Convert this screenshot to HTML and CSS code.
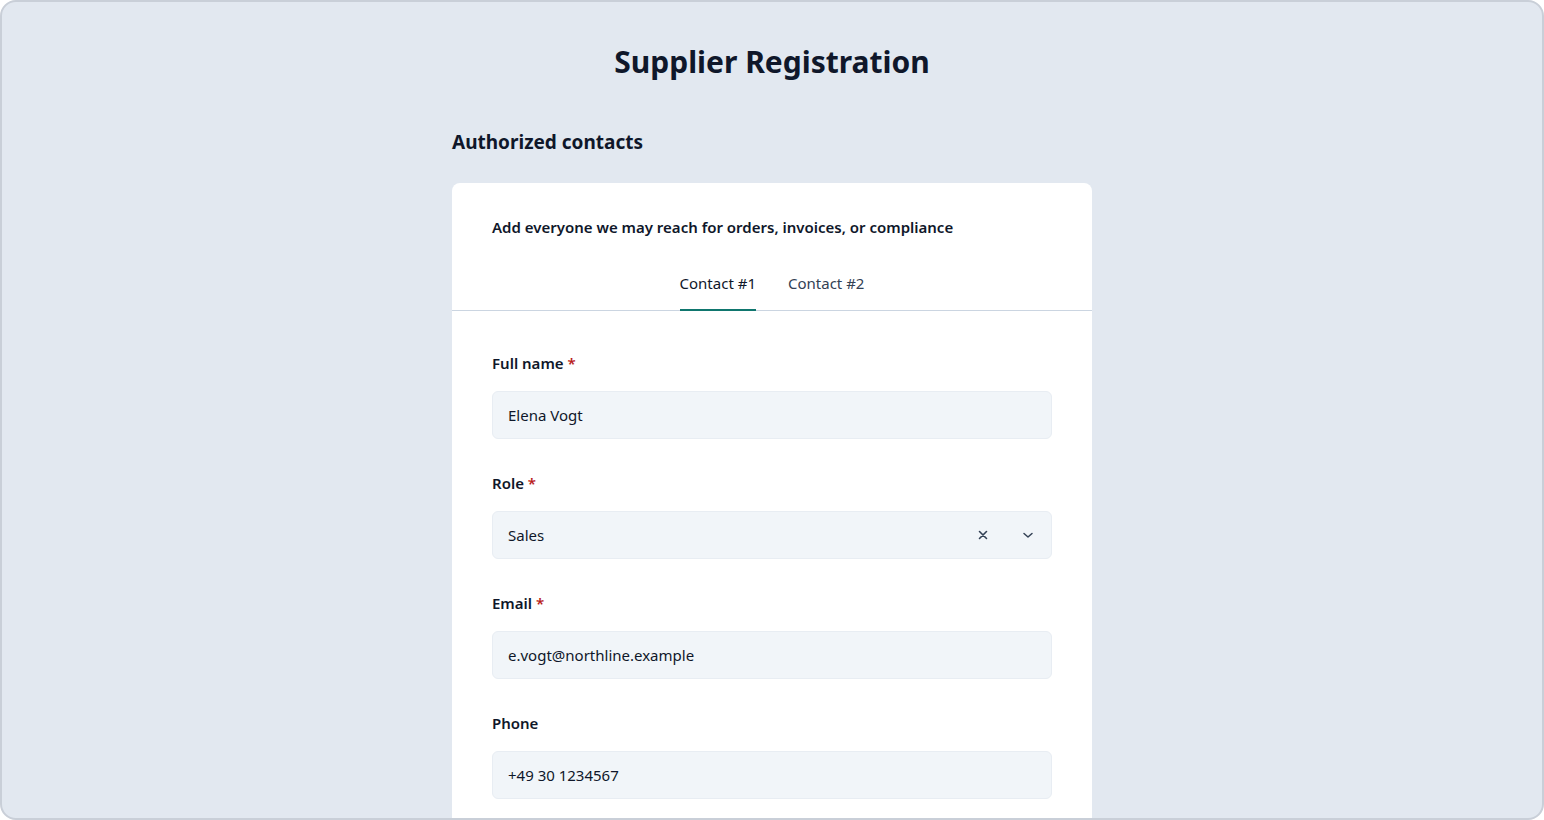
FILE: index.html
```html
<!DOCTYPE html>
<html lang="en">
<head>
<meta charset="utf-8">
<title>Supplier Registration</title>
<link rel="stylesheet" href="styles.css">
</head>
<body>
<div class="frame">
  <h1 class="title">Supplier Registration</h1>
  <main class="column">
    <h2 class="section-title">Authorized contacts</h2>
    <section class="card">
      <div class="card-head">
        <p class="subtitle">Add everyone we may reach for orders, invoices, or compliance</p>
      </div>
      <nav class="tabs">
        <span class="tab active">Contact #1</span>
        <span class="tab">Contact #2</span>
      </nav>
      <div class="card-body">
        <div class="field">
          <label class="label">Full name <span class="req">*</span></label>
          <div class="input">Elena Vogt</div>
        </div>
        <div class="field">
          <label class="label">Role <span class="req">*</span></label>
          <div class="input select">
            <span class="value">Sales</span>
            <span class="icons">
              <svg class="ico-x" width="10" height="10" viewBox="0 0 10 10"><path d="M1.5 1.5 L8.5 8.5 M8.5 1.5 L1.5 8.5" stroke="#334155" stroke-width="1.6" stroke-linecap="round"/></svg>
              <svg class="ico-chev" width="12" height="12" viewBox="0 0 12 12"><path d="M2 4.5 L6 8 L10 4.5" fill="none" stroke="#334155" stroke-width="1.5" stroke-linecap="round" stroke-linejoin="round"/></svg>
            </span>
          </div>
        </div>
        <div class="field">
          <label class="label">Email <span class="req">*</span></label>
          <div class="input">e.vogt@northline.example</div>
        </div>
        <div class="field">
          <label class="label">Phone</label>
          <div class="input">+49 30 1234567</div>
        </div>
      </div>
    </section>
  </main>
</div>
</body>
</html>
```

FILE: styles.css
```css
* { box-sizing: border-box; }
html, body {
  margin: 0;
  padding: 0;
  height: 100%;
}
body {
  font-family: "Noto Sans", "Open Sans", sans-serif;
  color: #0f172a;
  background: #ffffff;
}
.frame {
  width: 1544px;
  height: 820px;
  background: #e2e8f0;
  border: 2px solid #c9cfd8;
  border-radius: 16px;
  overflow: hidden;
  padding-top: 40px;
}
.title {
  margin: 0;
  text-align: center;
  font-size: 30px;
  line-height: 40px;
  font-weight: 700;
  color: #0f172a;
}
.column {
  width: 640px;
  margin: 0 auto;
  padding-top: 47px;
}
.section-title {
  margin: 0 0 28px;
  font-size: 19px;
  line-height: 26px;
  font-weight: 700;
  color: #0f172a;
}
.card {
  background: #ffffff;
  border-radius: 8px;
}
.card-head {
  padding: 34px 40px 0;
}
.subtitle {
  margin: 0;
  font-size: 15px;
  line-height: 20px;
  font-weight: 600;
  color: #0f172a;
}
.tabs {
  display: flex;
  justify-content: center;
  gap: 32px;
  border-bottom: 1px solid #cbd5e1;
  margin-top: 36px;
}
.tab {
  font-size: 15px;
  line-height: 20px;
  padding: 0 0 16px;
  color: #334155;
  border-bottom: 2px solid transparent;
  margin-bottom: -1px;
}
.tab.active {
  color: #0f172a;
  border-bottom-color: #0f766e;
}
.card-body {
  padding: 42px 40px 40px;
  display: flex;
  flex-direction: column;
  gap: 34px;
}
.field {
  display: flex;
  flex-direction: column;
  gap: 18px;
}
.label {
  font-size: 15px;
  line-height: 20px;
  font-weight: 600;
  color: #0f172a;
}
.req {
  color: #b91c1c;
  font-weight: 600;
}
.input {
  height: 48px;
  background: #f1f5f9;
  border: 1px solid #e8edf3;
  border-radius: 6px;
  padding: 0 15px;
  display: flex;
  align-items: center;
  font-size: 15px;
  color: #0f172a;
}
.select {
  justify-content: space-between;
}
.icons {
  display: flex;
  align-items: center;
  gap: 34px;
  padding-right: 2px;
}
.ico-x, .ico-chev { display: block; }
```
